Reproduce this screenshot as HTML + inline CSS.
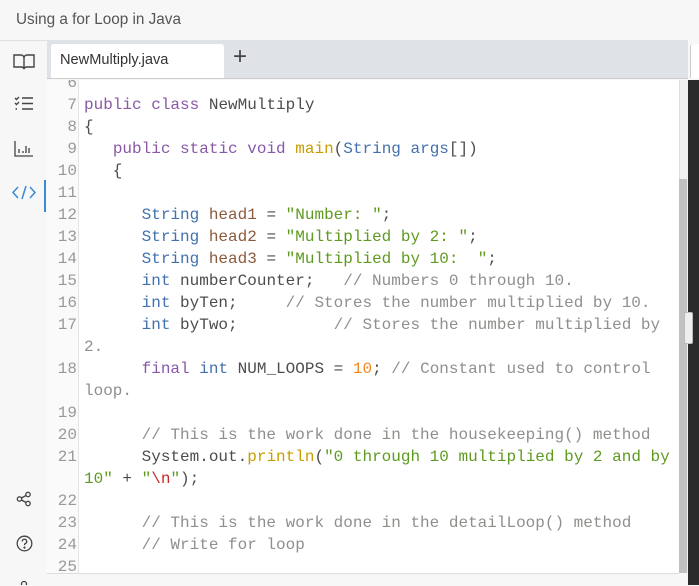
<!DOCTYPE html>
<html><head><style>
body{margin:0;width:699px;height:585px;overflow:hidden;background:#f7f7f7;font-family:"Liberation Sans",sans-serif;position:relative}
.title{position:absolute;left:16px;top:11px;font-size:15.3px;color:#555}
.side{position:absolute;left:0;top:40px;width:47px;height:545px;background:#f7f7f7;border-top:1px solid #e0e0e0}
.tabbar{position:absolute;left:47px;top:40px;width:641px;height:38px;background:#dfe2e6;border-bottom:1px solid #ccc}
.tab{position:absolute;left:51px;top:44px;width:173px;height:34px;background:#fff;border-radius:3px 3px 0 0;font-size:14.6px;color:#333;line-height:32px;padding-left:9px;box-sizing:border-box}
.plus{position:absolute;left:233px;top:43px;font-size:24px;color:#444}
.code{position:absolute;left:47px;top:80px;width:632px;height:493px;background:#fff;overflow:hidden;border-bottom:1px solid #ddd}
.gut{position:absolute;left:0;top:0;width:31px;height:100%;border-right:1px solid #e4e4e4;background:#fafafa}
.lines{position:absolute;left:0;top:-8px;font-family:"Liberation Mono",monospace;font-size:16px;line-height:22px;white-space:pre;color:#4d4d4c}
.ln{display:inline-block;width:30px;text-align:right;color:#999;margin-right:7px}
.k{color:#8959a8}.t{color:#4271ae}.v{color:#8a5a3c}.s{color:#5e9a1f}.n{color:#f5871f}.c{color:#8e908c}.f{color:#c99e00}.r{color:#c82829}
.track{position:absolute;left:679px;top:80px;width:8px;height:493px;background:#f0f0f0;border-left:1px solid #ddd}
.thumb{position:absolute;left:679px;top:179px;width:8px;height:394px;background:#c1c1c1}
.dark{position:absolute;left:688px;top:80px;width:11px;height:505px;background:#2b2b2b}
.grip{position:absolute;left:684px;top:312px;width:7px;height:30px;background:#eee;border:1px solid #bbb;border-radius:2px}
svg{position:absolute}
</style></head><body>
<div class="title">Using a for Loop in Java</div>
<div class="side"></div>
<div class="tabbar"></div>
<div style="position:absolute;left:690px;top:44px;width:9px;height:34px;background:#fff;border-radius:3px 0 0 0;border-left:1px solid #ccc"></div>
<div class="tab">NewMultiply.java</div>
<div class="plus">+</div>
<div class="code"><div class="gut"></div><div class="lines"><span class="ln">6</span>
<span class="ln">7</span><span class="k">public</span> <span class="k">class</span> NewMultiply
<span class="ln">8</span>{
<span class="ln">9</span>   <span class="k">public</span> <span class="k">static</span> <span class="k">void</span> <span class="f">main</span>(<span class="t">String</span> <span class="t">args</span>[])
<span class="ln">10</span>   {
<span class="ln">11</span>
<span class="ln">12</span>      <span class="t">String</span> <span class="v">head1</span> = <span class="s">"Number: "</span>;
<span class="ln">13</span>      <span class="t">String</span> <span class="v">head2</span> = <span class="s">"Multiplied by 2: "</span>;
<span class="ln">14</span>      <span class="t">String</span> <span class="v">head3</span> = <span class="s">"Multiplied by 10:  "</span>;
<span class="ln">15</span>      <span class="t">int</span> numberCounter;   <span class="c">// Numbers 0 through 10.</span>
<span class="ln">16</span>      <span class="t">int</span> byTen;     <span class="c">// Stores the number multiplied by 10.</span>
<span class="ln">17</span>      <span class="t">int</span> byTwo;          <span class="c">// Stores the number multiplied by</span>
<span class="ln"></span><span class="c">2.</span>
<span class="ln">18</span>      <span class="k">final</span> <span class="t">int</span> NUM_LOOPS = <span class="n">10</span>; <span class="c">// Constant used to control</span>
<span class="ln"></span><span class="c">loop.</span>
<span class="ln">19</span>
<span class="ln">20</span>      <span class="c">// This is the work done in the housekeeping() method</span>
<span class="ln">21</span>      System.out.<span class="f">println</span>(<span class="s">"0 through 10 multiplied by 2 and by</span>
<span class="ln"></span><span class="s">10"</span> + <span class="s">"<span class="r">\n</span>"</span>);
<span class="ln">22</span>
<span class="ln">23</span>      <span class="c">// This is the work done in the detailLoop() method</span>
<span class="ln">24</span>      <span class="c">// Write for loop</span>
<span class="ln">25</span>
</div></div>
<div class="track"></div><div class="thumb"></div>
<div class="dark"></div><div class="grip"></div>
<svg style="left:13px;top:53px" width="22" height="17" viewBox="0 0 22 17" fill="none" stroke="#444" stroke-width="1.4"><path d="M1 2h7a3 3 0 0 1 3 3v11a3 3 0 0 0-3-2H1zM21 2h-7a3 3 0 0 0-3 3v11a3 3 0 0 1 3-2h7z"/></svg>
<svg style="left:14px;top:96px" width="20" height="16" viewBox="0 0 20 16" fill="none" stroke="#444" stroke-width="1.4"><path d="M1 2l1.5 1.5L5 1M1 7l1.5 1.5L5 6M1.5 13h1.5M8 2h11M8 7.5h11M8 13h11"/></svg>
<svg style="left:14px;top:140px" width="20" height="17" viewBox="0 0 20 17" fill="none" stroke="#444" stroke-width="1.3"><path d="M1 1v15h18M5 13v-4M9 13v-2M12 13v-7M15 13v-5"/></svg>
<svg style="left:12px;top:185px" width="24" height="15" viewBox="0 0 24 15" fill="none" stroke="#3a8bd1" stroke-width="1.5"><path d="M6 2L1 7.5 6 13M18 2l5 5.5L18 13M14 1l-4 13"/></svg>
<div style="position:absolute;left:44px;top:180px;width:2px;height:32px;background:#3a8bd1"></div>
<svg style="left:16px;top:491px" width="16" height="16" viewBox="0 0 16 16" fill="none" stroke="#444" stroke-width="1.3"><circle cx="3.5" cy="8" r="2.2"/><circle cx="12" cy="3.5" r="2.2"/><circle cx="12" cy="12.5" r="2.2"/><path d="M5.5 7l4.5-2.5M5.5 9l4.5 2.5"/></svg>
<svg style="left:16px;top:535px" width="17" height="17" viewBox="0 0 17 17" fill="none" stroke="#444" stroke-width="1.3"><circle cx="8.5" cy="8.5" r="7.3"/><path d="M6.3 6.5a2.2 2.2 0 1 1 3 2c-.8.4-.8 1-.8 1.8"/><circle cx="8.5" cy="12.6" r=".5" fill="#444"/></svg>
<svg style="left:19px;top:579px" width="10" height="6"><circle cx="5" cy="5" r="2.5" fill="none" stroke="#444" stroke-width="1.3"/></svg>
</body></html>
